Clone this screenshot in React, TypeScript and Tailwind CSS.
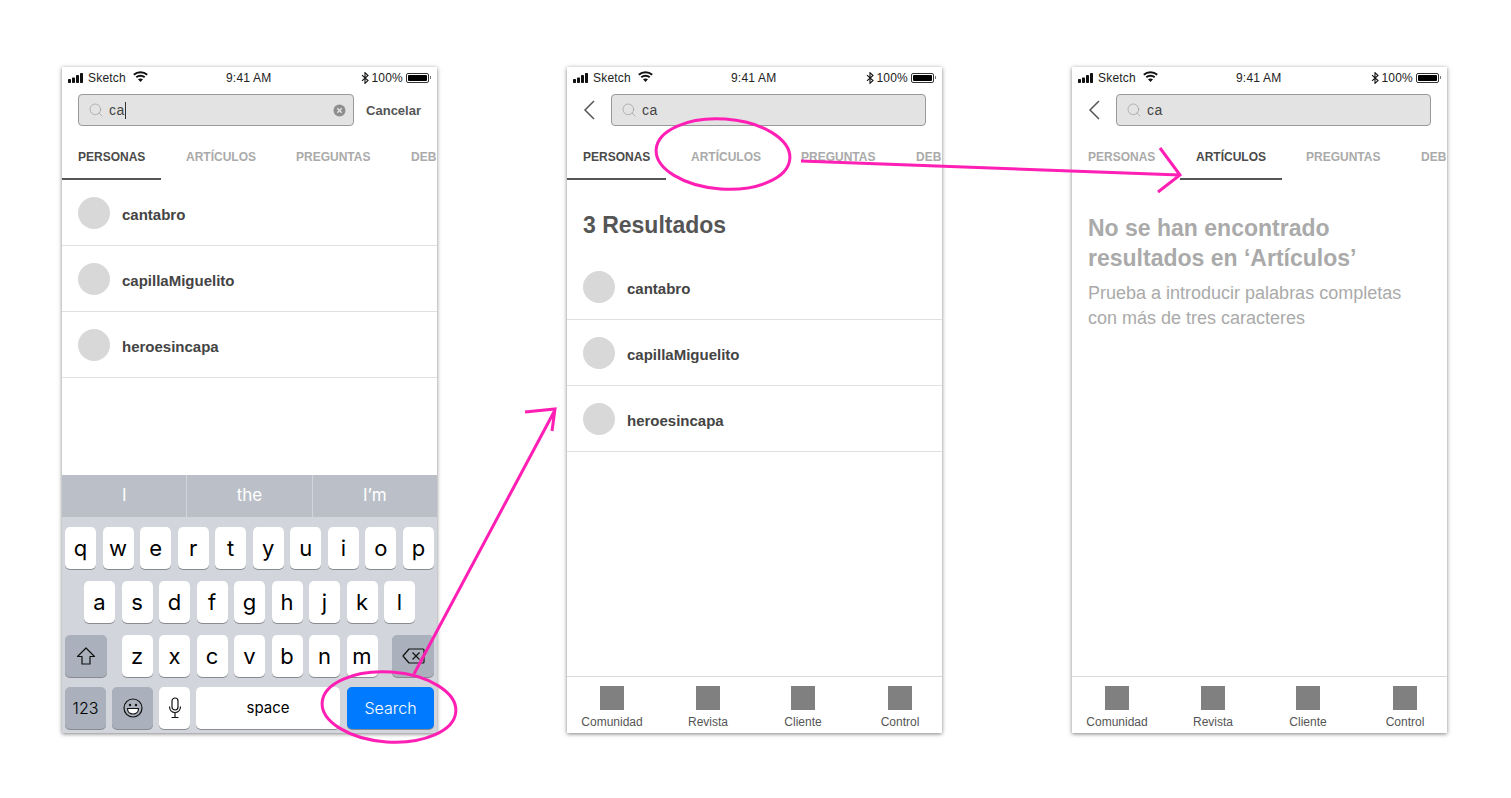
import { Search } from 'lucide-react'

const people = ['cantabro', 'capillaMiguelito', 'heroesincapa']
const tabs = [
  { label: 'PERSONAS', width: 'w-[108px]', line: 'w-[99px]' },
  { label: 'ARTÍCULOS', width: 'w-[110px]', line: 'w-[102px]' },
  { label: 'PREGUNTAS', width: 'w-[115px]', line: 'w-[100px]' },
  { label: 'DEBATES', width: 'w-[80px]', line: 'w-[80px]' },
]

function StatusBar() {
  return (
    <div className="relative flex h-[20px] items-center px-[6px] pt-[1px] text-[12px] tracking-[0.2px] text-[#222]">
      <svg width="16" height="10" viewBox="0 0 16 10" fill="#111" className="mr-[4px]">
        <rect x="0" y="6" width="3" height="4" rx="0.7" />
        <rect x="4" y="4.500" width="3" height="5.500" rx="0.7" />
        <rect x="8" y="2" width="3" height="8" rx="0.7" />
        <rect x="12" y="0" width="3" height="10" rx="0.7" />
      </svg>
      <span>Sketch</span>
      <svg width="15" height="11" viewBox="0 0 15 11" fill="none" stroke="#111" strokeWidth="1.900" className="ml-[7px] -mt-[3px]">
        <path d="M.8 3.800C4.500.4 10.500.4 14.200 3.800" />
        <path d="M3.300 6.300C5.600 4.200 9.400 4.200 11.700 6.300" />
        <path d="M7.500 11 5 8.300c1.400-1.100 3.600-1.100 5 0z" fill="#111" stroke="none" />
      </svg>
      <span className="absolute left-[164px]">9:41 AM</span>
      <div className="ml-auto flex items-center">
        <svg width="8" height="12" viewBox="0 0 8 12" fill="none" stroke="#111" strokeWidth="1.100" className="mr-[3px]">
          <path d="M1 3.200 7 8.500 4 11.300V.7L7 3.500 1 8.800" />
        </svg>
        <span>100%</span>
        <div className="ml-[3px] flex h-[10px] w-[23px] rounded-[2px] border border-[#333] p-[1px]">
          <div className="h-full w-full rounded-[1px] bg-black" />
        </div>
        <div className="ml-[1px] h-[3px] w-[1px] bg-[#777]" />
      </div>
    </div>
  )
}

function SearchField({ typing }: { typing?: boolean }) {
  return (
    <div className="flex h-[32px] flex-1 items-center rounded-[4px] border border-[#999] bg-[#e3e3e3] pl-[9px] pr-[7px]">
      <Search size={16} strokeWidth={1} className="text-[#999]" />
      <span className="ml-[5px] text-[14px] tracking-[0.4px] text-[#444]">ca</span>
      {typing && (
        <>
          <div className="h-[17px] w-[1px] bg-[#333]" />
          <svg width="13" height="13" viewBox="0 0 13 13" className="ml-auto">
            <circle cx="6.500" cy="6.500" r="6" fill="#8e8e8e" />
            <path d="M4.300 4.300l4.400 4.400M8.700 4.300l-4.400 4.400" stroke="#e3e3e3" strokeWidth="1.500" />
          </svg>
        </>
      )}
    </div>
  )
}

function Tabs({ active }: { active: number }) {
  return (
    <div className="mt-[9px] flex h-[45px] w-[374px] overflow-hidden">
      {tabs.map((tab, i) => (
        <div
          key={tab.label}
          className={`relative shrink-0 pl-[16px] pt-[13px] text-[12px] font-bold whitespace-nowrap ${tab.width} ${i === active ? 'text-[#4a4a4a]' : 'text-[#aaaaaa]'}`}
        >
          {tab.label}
          {i === active && <div className={`absolute bottom-0 left-0 h-[2px] bg-[#555] ${tab.line}`} />}
        </div>
      ))}
    </div>
  )
}

function PersonRows() {
  return (
    <div>
      {people.map((name) => (
        <div key={name} className="flex h-[66px] items-center border-b border-[#e0e0e0] pl-[16px]">
          <div className="h-[32px] w-[32px] rounded-full bg-[#d8d8d8]" />
          <span className="ml-[12px] pt-[5px] text-[15px] font-bold text-[#444]">{name}</span>
        </div>
      ))}
    </div>
  )
}

function BottomBar() {
  const items = [
    { label: 'Comunidad', margin: 'ml-[13px]' },
    { label: 'Revista', margin: 'ml-[32px]' },
    { label: 'Cliente', margin: 'ml-[31px]' },
    { label: 'Control', margin: 'ml-[33px]' },
  ]
  return (
    <div className="mt-auto flex h-[57px] border-t border-[#d9d9d9]">
      {items.map((item) => (
        <div key={item.label} className={`flex w-[64px] flex-col items-center pt-[9px] ${item.margin}`}>
          <div className="h-[24px] w-[24px] bg-[#808080]" />
          <span className="mt-[3px] text-[12px] text-[#555] whitespace-nowrap">{item.label}</span>
        </div>
      ))}
    </div>
  )
}

function BackButton() {
  return (
    <svg width="12" height="20" viewBox="0 0 12 20" fill="none" stroke="#555" strokeWidth="1.500" className="mx-[16px] shrink-0">
      <path d="M11 1 2 10l9 9" />
    </svg>
  )
}

function Key({ children, className = 'w-[31px] bg-white text-[22px]' }: { children: React.ReactNode; className?: string }) {
  return (
    <div className={`flex h-[42px] shrink-0 items-center justify-center rounded-[5px] text-black shadow-[0_1px_0_#888b90] ${className}`}>
      {children}
    </div>
  )
}

function Keyboard() {
  return (
    <div className="mt-auto h-[258px] bg-[#d2d5db] font-['Inter',sans-serif]">
      <div className="flex h-[42px] bg-[#bbc0c8] text-[17px] text-white">
        <div className="flex flex-1 items-center justify-center border-r border-[#d2d5db]">I</div>
        <div className="flex flex-1 items-center justify-center border-r border-[#d2d5db]">the</div>
        <div className="flex flex-1 items-center justify-center">I’m</div>
      </div>
      <div className="mt-[10px] flex justify-between px-[3px]">
        {'qwertyuiop'.split('').map((k) => <Key key={k}>{k}</Key>)}
      </div>
      <div className="mt-[12px] flex justify-center gap-[6.500px]">
        {'asdfghjkl'.split('').map((k) => <Key key={k}>{k}</Key>)}
      </div>
      <div className="mt-[12px] flex justify-between px-[3px]">
        <Key className="w-[42px] bg-[#aab1bc]">
          <svg width="20" height="18" viewBox="0 0 20 18" fill="none" stroke="#111" strokeWidth="1.200">
            <path d="M10 1 1.500 9.500H6V17h8V9.500h4.500z" strokeLinejoin="round" />
          </svg>
        </Key>
        <div className="flex gap-[6.500px]">
          {'zxcvbnm'.split('').map((k) => <Key key={k}>{k}</Key>)}
        </div>
        <Key className="w-[42px] bg-[#aab1bc]">
          <svg width="23" height="16" viewBox="0 0 23 16" fill="none" stroke="#111" strokeWidth="1.200">
            <path d="M7 1h14a1 1 0 0 1 1 1v12a1 1 0 0 1-1 1H7L1 8z" strokeLinejoin="round" />
            <path d="M10.500 4.500l7 7M17.500 4.500l-7 7" />
          </svg>
        </Key>
      </div>
      <div className="mt-[10px] flex gap-[6px] px-[3px]">
        <Key className="w-[41px] bg-[#aab1bc] text-[16px] font-light">123</Key>
        <Key className="w-[41px] bg-[#aab1bc]">
          <svg width="20" height="20" viewBox="0 0 20 20" fill="none" stroke="#111" strokeWidth="1.200">
            <circle cx="10" cy="10" r="9" />
            <circle cx="7" cy="7" r="1.200" fill="#111" stroke="none" />
            <circle cx="13" cy="7" r="1.200" fill="#111" stroke="none" />
            <path d="M4.500 10.500h11c0 3.200-2.400 5.500-5.500 5.500s-5.500-2.300-5.500-5.500z" fill="#fff" />
          </svg>
        </Key>
        <Key className="w-[31px] bg-white">
          <svg width="14" height="22" viewBox="0 0 14 22" fill="none" stroke="#111" strokeWidth="1.200">
            <rect x="4" y="1" width="6" height="12" rx="3" />
            <path d="M1.500 9.500c0 3.500 2.300 6 5.500 6s5.500-2.500 5.500-6M7 15.500V20M3.500 20.500h7" />
          </svg>
        </Key>
        <Key className="w-[144px] bg-white text-[15px]">space</Key>
        <Key className="ml-[1px] w-[87px] bg-[#007aff] text-[16px] font-light !text-white">Search</Key>
      </div>
    </div>
  )
}

function Phone({ children }: { children: React.ReactNode }) {
  return (
    <div className="flex h-[666px] w-[375px] shrink-0 flex-col overflow-hidden bg-white shadow-[0_1px_4px_rgba(0,0,0,0.5)]">
      {children}
    </div>
  )
}

export default function App() {
  return (
    <div className="relative h-[798px] w-[1511px] overflow-hidden bg-white font-['Liberation_Sans',Arial,sans-serif]">
      <div className="flex gap-[130px] pl-[62px] pt-[67px]">
        <Phone>
          <StatusBar />
          <div className="mt-[7px] flex items-center pl-[16px] pr-[16px]">
            <SearchField typing />
            <span className="ml-[12px] pt-[1px] text-[13px] font-bold text-[#555]">Cancelar</span>
          </div>
          <Tabs active={0} />
          <PersonRows />
          <Keyboard />
        </Phone>

        <Phone>
          <StatusBar />
          <div className="mt-[7px] flex items-center pr-[16px]">
            <BackButton />
            <SearchField />
          </div>
          <Tabs active={0} />
          <h2 className="mb-[14px] mt-[30px] pl-[16px] text-[23px] leading-[30px] font-bold text-[#555]">3 Resultados</h2>
          <PersonRows />
          <BottomBar />
        </Phone>

        <Phone>
          <StatusBar />
          <div className="mt-[7px] flex items-center pr-[16px]">
            <BackButton />
            <SearchField />
          </div>
          <Tabs active={1} />
          <div className="mt-[33px] pl-[16px]">
            <h2 className="text-[23px] leading-[30px] font-bold text-[#aaaaaa]">
              No se han encontrado
              <br />
              resultados en ‘Artículos’
            </h2>
            <p className="mt-[8px] text-[18px] leading-[25px] text-[#aaaaaa]">
              Prueba a introducir palabras completas
              <br />
              con más de tres caracteres
            </p>
          </div>
          <BottomBar />
        </Phone>
      </div>

      {/* flow annotations on top of the screens */}
      <svg className="pointer-events-none absolute inset-0" width="1511" height="798" fill="none" stroke="#ff1fb4" strokeWidth="3">
        <ellipse cx="389" cy="707" rx="67" ry="35" transform="rotate(4 389 707)" />
        <path d="M414 674 555 410M525 412l30-3-3 22" />
        <ellipse cx="723" cy="154" rx="67" ry="35" transform="rotate(4 723 154)" />
        <path d="M801 161 1180 175M1160 148l20 27-22 17" />
      </svg>
    </div>
  )
}
